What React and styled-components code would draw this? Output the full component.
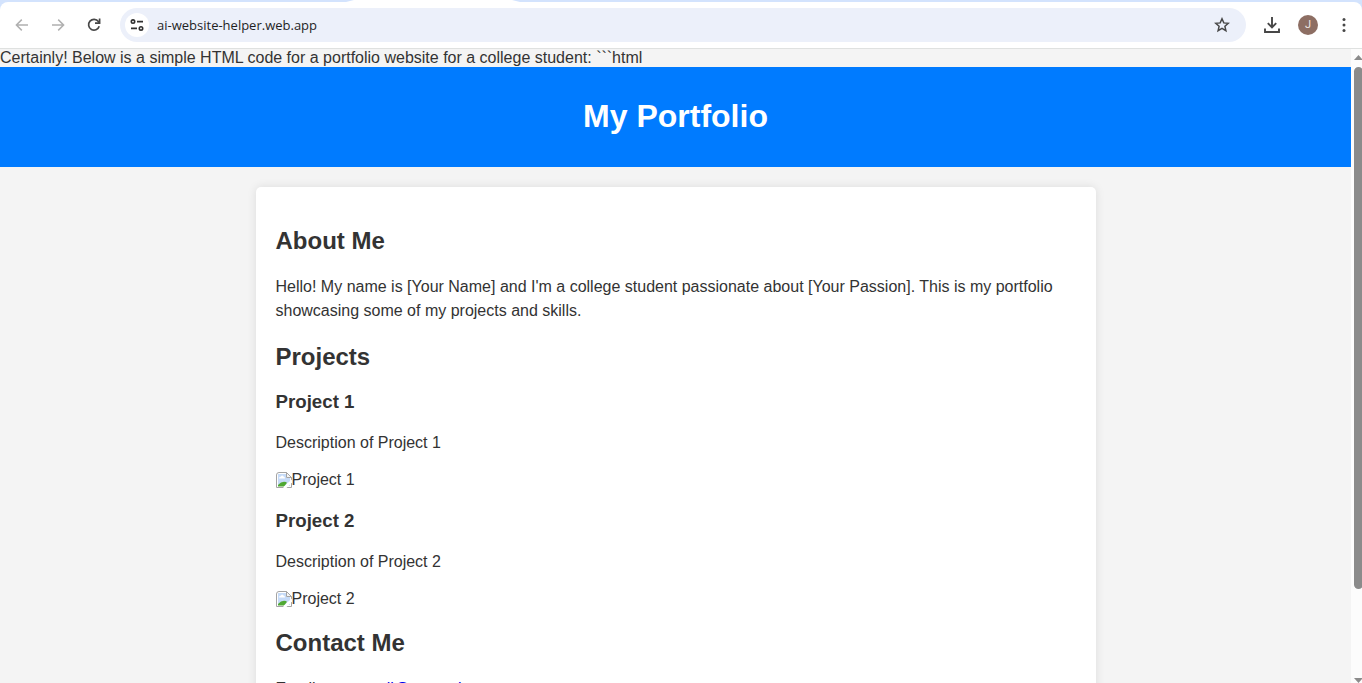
import React from "react";
import styled, { createGlobalStyle } from "styled-components";

const GlobalStyle = createGlobalStyle`
  * { box-sizing: border-box; }
  body {
    margin: 0;
    overflow: hidden;
    background: #f4f4f4;
    color: #333;
    font-family: Arial, "Liberation Sans", sans-serif;
    font-size: 16px;
  }
`;

const Browser = styled.div`
  display: flex;
  flex-direction: column;
  height: 100vh;
  background: #d3e3fd;
`;

const TabStrip = styled.div`
  flex: none;
  height: 2px;
  padding-left: 346px;
`;

const ActiveTab = styled.div`
  width: 174px;
  height: 2px;
  background: #fff;
  clip-path: polygon(8px 0, 166px 0, 100% 100%, 0 100%);
`;

const Toolbar = styled.div`
  flex: none;
  display: flex;
  align-items: center;
  height: 47px;
  padding: 0 0 0 4px;
  background: #fff;
  border-bottom: 1px solid #dfe1e0;
  border-radius: 8px 8px 0 0;
`;

const IconButton = styled.button`
  flex: none;
  display: flex;
  align-items: center;
  justify-content: center;
  width: 36px;
  height: 34px;
  padding: 0;
  border: 0;
  background: none;
  color: ${(p) => (p.disabled ? "#b0b0b0" : "#474747")};
`;

const AddressBar = styled.form`
  flex: 1;
  min-width: 0;
  display: flex;
  align-items: center;
  height: 34px;
  margin: 0 8px;
  padding: 0 6px 0 5px;
  border-radius: 17px;
  background: #ecf0fa;
`;

const SiteInfo = styled.button`
  flex: none;
  display: flex;
  align-items: center;
  justify-content: center;
  width: 24px;
  height: 24px;
  padding: 0;
  border: 0;
  border-radius: 50%;
  background: #fff;
  color: #303030;
`;

const Address = styled.input`
  flex: 1;
  min-width: 0;
  padding: 0 8px;
  border: 0;
  outline: 0;
  background: none;
  color: #1f1f1f;
  font: 13px/18px "Segoe UI", "Open Sans", sans-serif;
`;

const Avatar = styled.span`
  display: flex;
  align-items: center;
  justify-content: center;
  width: 20px;
  height: 20px;
  border-radius: 50%;
  background: #8d6e63;
  color: #efe6e3;
  font: 11px/20px Roboto, sans-serif;
`;

const Viewport = styled.div`
  flex: 1;
  min-height: 0;
  display: flex;
  overflow: hidden;
  background: #f4f4f4;
`;

const Page = styled.div`
  flex: 1;
  min-width: 0;
  overflow: hidden;
  line-height: 18px;
`;

const Banner = styled.header`
  padding: 30px 0 32px;
  background: #007bff;
  color: #fff;
  text-align: center;
`;

const Title = styled.h1`
  margin: 0;
  font-size: 32px;
  line-height: 38px;
`;

const Card = styled.main`
  max-width: 840px;
  margin: 20px auto;
  padding: 20px;
  border-radius: 5px;
  background: #fff;
  box-shadow: 0 0 10px rgba(0, 0, 0, 0.1);
`;

const SectionTitle = styled.h2`
  margin: 20px 0;
  font-size: 24px;
  line-height: 28px;
`;

const ProjectTitle = styled.h3`
  margin: 20px 0 18px;
  line-height: 22px;
`;

const Paragraph = styled.p`
  margin: 16px 0;
  line-height: 24px;
`;

const MissingImage = styled.div`
  display: flex;
  height: 19px;
`;

const Link = styled.a`
  color: #0000ee;
`;

const Scrollbar = styled.div`
  flex: none;
  display: flex;
  flex-direction: column;
  justify-content: space-between;
  width: 11px;
  padding: 6px 0 0 3px;
  overflow: hidden;
  background: #fcfcfc;
`;

const Track = styled.div`
  flex: 1;
  margin: 7px 0 6px;
`;

const Thumb = styled.div`
  width: 9px;
  height: 86.3%;
  border-radius: 5px;
  background: #8b8b8b;
`;

const Arrow = styled.svg`
  flex: none;
  display: block;
`;

function NavArrow({ forward }) {
  return (
    <svg width="14" height="14" viewBox="0 0 14 14" fill="none" stroke="currentColor" strokeWidth="1.5">
      <path d={forward ? "M1 7H12.4M7.2 1.6 12.6 7l-5.4 5.4" : "M13 7H1.6M6.8 1.6 1.4 7l5.4 5.4"} />
    </svg>
  );
}

function BrokenImage({ label }) {
  return (
    <MissingImage role="img" aria-label={label}>
      <svg width="16" height="18" viewBox="0 0 16 18" aria-hidden="true">
        <path d="M3 1.5h7.5l5 5V16.5H.5V4Q.5 1.5 3 1.5Z" fill="#fff" stroke="#a4a4a4" />
        <path d="M2 3h8v4h4v8H2Z" fill="#c6dbf8" />
        <path d="M3 7.500q0-2 2-2 1-2 2.500 0Q9 5.500 9 7.500Z" fill="#fff" />
        <path d="M2 15.500v-1.500q4-4.500 8-3L11 12 8 15.500Z" fill="#4fa832" />
        <path d="m7 17 4-4.500 5-4v3L10.500 17Z" fill="#fff" />
        <path d="M10.500 1.500v5h5Z" fill="#f4f4f4" stroke="#a4a4a4" />
      </svg>
      <span>{label}</span>
    </MissingImage>
  );
}

function Project({ number }) {
  return (
    <article>
      <ProjectTitle>Project {number}</ProjectTitle>
      <Paragraph>Description of Project {number}</Paragraph>
      <BrokenImage label={`Project ${number}`} />
    </article>
  );
}

export default function App() {
  return (
    <>
      <GlobalStyle />
      <Browser>
        <TabStrip><ActiveTab /></TabStrip>
        <Toolbar>
          <IconButton disabled aria-label="Back"><NavArrow /></IconButton>
          <IconButton disabled aria-label="Forward"><NavArrow forward /></IconButton>
          <IconButton aria-label="Reload">
            <svg width="14" height="14" viewBox="0 0 14 14" fill="none" stroke="currentColor" strokeWidth="1.7">
              <path d="M12.2 8.3A5.4 5.4 0 1 1 11.4 3.6L12.6 5" />
              <path d="M12.6.6V5.2H8" />
            </svg>
          </IconButton>
          <AddressBar onSubmit={(e) => e.preventDefault()}>
            <SiteInfo type="button" aria-label="View site information">
              <svg width="14" height="14" viewBox="0 0 14 14" fill="none" stroke="currentColor" strokeWidth="1.6">
                <circle cx="3" cy="3.600" r="1.700" />
                <path d="M7 3.600h6M1 10.400h6" />
                <circle cx="11" cy="10.400" r="1.700" />
              </svg>
            </SiteInfo>
            <Address aria-label="Address" defaultValue="ai-website-helper.web.app" spellCheck={false} />
            <IconButton type="button" aria-label="Bookmark this page">
              <svg width="16" height="16" viewBox="0 0 16 16" fill="none" stroke="currentColor" strokeWidth="1.5">
                <path d="m8 1.800 1.800 4.100 4.500.4-3.400 3 1 4.400L8 11.400l-3.900 2.300 1-4.400-3.400-3 4.500-.4Z" />
              </svg>
            </IconButton>
          </AddressBar>
          <IconButton aria-label="Downloads">
            <svg width="16" height="16" viewBox="0 0 16 16" fill="none" stroke="currentColor" strokeWidth="1.9">
              <path d="M8 0v10M3.800 6.200 8 10.400l4.200-4.200M1 11.500V15h14v-3.500" />
            </svg>
          </IconButton>
          <IconButton aria-label="Profile"><Avatar>J</Avatar></IconButton>
          <IconButton aria-label="Menu">
            <svg width="4" height="14" viewBox="0 0 4 14" fill="currentColor">
              <circle cx="2" cy="1.600" r="1.500" />
              <circle cx="2" cy="7" r="1.500" />
              <circle cx="2" cy="12.400" r="1.500" />
            </svg>
          </IconButton>
        </Toolbar>
        <Viewport>
          <Page>
            Certainly! Below is a simple HTML code for a portfolio website for a college student: ```html
            <Banner><Title>My Portfolio</Title></Banner>
            <Card>
              <SectionTitle>About Me</SectionTitle>
              <Paragraph>
                Hello! My name is [Your Name] and I'm a college student passionate about [Your Passion]. This is my
                portfolio showcasing some of my projects and skills.
              </Paragraph>
              <SectionTitle>Projects</SectionTitle>
              <Project number={1} />
              <Project number={2} />
              <SectionTitle>Contact Me</SectionTitle>
              <Paragraph>
                Email: <Link href="mailto:youremail@example.com">youremail@example.com</Link>
              </Paragraph>
            </Card>
          </Page>
          <Scrollbar aria-hidden="true">
            <Arrow width="9" height="5" viewBox="0 0 9 5"><path d="M0 5 4.5 0 9 5Z" fill="#8b8b8b" /></Arrow>
            <Track><Thumb /></Track>
            <Arrow width="9" height="5" viewBox="0 0 9 5"><path d="M0 0 4.5 5 9 0Z" fill="#8b8b8b" /></Arrow>
          </Scrollbar>
        </Viewport>
      </Browser>
    </>
  );
}
